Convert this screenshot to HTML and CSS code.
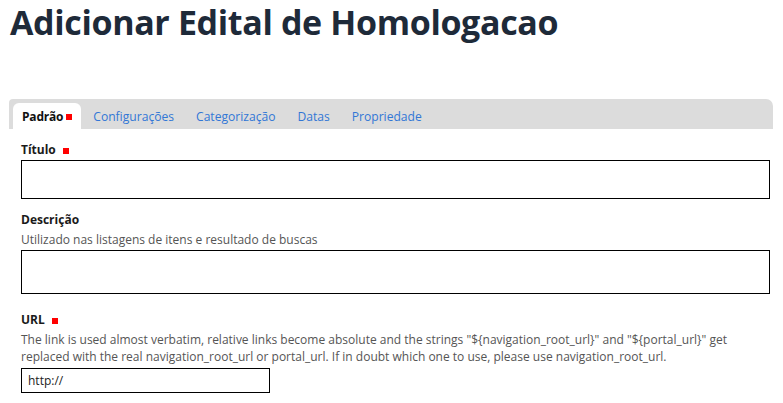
FILE: index.html
```html
<!DOCTYPE html>
<html lang="pt">
<head>
<meta charset="utf-8">
<title>Adicionar Edital de Homologacao</title>
<link rel="stylesheet" href="styles.css">
</head>
<body>
<main class="page">
  <h1 class="page-title">Adicionar Edital de Homologacao</h1>
  <form class="edit-form">
    <nav class="tabs">
      <span class="tab active">Padrão<span class="req-mark req-tab"></span></span>
      <a class="tab" href="#">Configurações</a>
      <a class="tab" href="#">Categorização</a>
      <a class="tab" href="#">Datas</a>
      <a class="tab" href="#">Propriedade</a>
    </nav>
    <div class="fields">
      <div class="field">
        <label class="label">Título <span class="req-mark"></span></label>
        <input class="text-input full" type="text">
      </div>
      <div class="field field-wide">
        <label class="label">Descrição</label>
        <div class="help">Utilizado nas listagens de itens e resultado de buscas</div>
        <textarea class="text-input full area"></textarea>
      </div>
      <div class="field">
        <label class="label">URL <span class="req-mark"></span></label>
        <div class="help">The link is used almost verbatim, relative links become absolute and the strings "${navigation_root_url}" and "${portal_url}" get replaced with the real navigation_root_url or portal_url. If in doubt which one to use, please use navigation_root_url.</div>
        <input class="text-input url" type="text" value="http://">
      </div>
    </div>
  </form>
</main>
</body>
</html>
```
FILE: styles.css
```css
* { box-sizing: border-box; }
html, body { margin: 0; padding: 0; background: #fff; }
body {
  font-family: "Open Sans", "DejaVu Sans", sans-serif;
  color: #222;
  font-size: 12px;
}
.page { padding: 0 10px 0 9px; }
.page-title {
  margin: 0;
  padding: 0 0 0 1px;
  font-size: 34px;
  line-height: 44px;
  font-weight: 700;
  color: #1e2a39;
  letter-spacing: -0.35px;
}
.edit-form { margin-top: 55px; }
.tabs {
  display: flex;
  align-items: flex-end;
  height: 30px;
  padding: 0 0 0 4px;
  background: #dcdcdc;
  border-radius: 4px 7px 0 0;
}
.tab {
  display: flex;
  align-items: center;
  height: 26px;
  padding: 0 11px;
  font-size: 12.1px;
  color: #3277d6;
  text-decoration: none;
}
.tab.active {
  background: #fff;
  color: #111;
  font-weight: 700;
  font-size: 12px;
  border-radius: 6px 6px 0 0;
  padding: 0 9px 0 9px;
  margin-right: 1px;
  letter-spacing: -0.2px;
}
.req-mark {
  display: inline-block;
  width: 6px;
  height: 6px;
  background: #f00;
  vertical-align: middle;
  margin-left: 4px;
}
.req-tab { margin-left: 3px; margin-top: 1px; }
.fields { padding: 12px 3px 0 12px; }
.field { margin-bottom: 12px; }
.field-wide { margin-bottom: 17px; }
.label {
  display: block;
  font-weight: 700;
  font-size: 12px;
  line-height: 17px;
  color: #1a1a1a;
}
.help {
  color: #555;
  font-size: 12px;
  line-height: 17px;
  margin-top: 3px;
}
.text-input {
  display: block;
  border: 1px solid #000;
  background: #fff;
  font-family: "Open Sans", "DejaVu Sans", sans-serif;
  font-size: 12px;
  color: #222;
  margin: 2px 0 0 0;
  padding: 2px 6px;
}
.full { width: 749px; height: 39px; }
.area { height: 44px; resize: none; margin-top: 2px; }
.url { width: 249px; height: 25px; margin-top: 3px; }
```
